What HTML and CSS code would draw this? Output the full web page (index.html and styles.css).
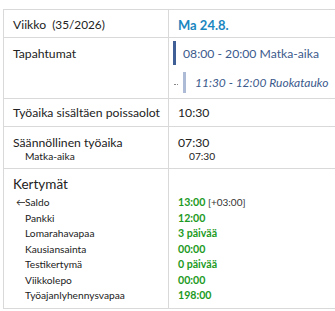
FILE: index.html
```html
<!DOCTYPE html>
<html lang="fi">
<head>
<meta charset="utf-8">
<link rel="stylesheet" href="styles.css">
</head>
<body>
<div class="table">
  <div class="row row-head">
    <div class="cell">Viikko <span class="week">(35/2026)</span></div>
    <div class="cell cell-r date">Ma 24.8.</div>
  </div>
  <div class="row row-events">
    <div class="cell">Tapahtumat</div>
    <div class="cell cell-r events">
      <div class="event ev1"><span class="bar bar1"></span><span>08:00 - 20:00 Matka-aika</span></div>
      <div class="event ev2"><span class="dots"></span><span class="bar bar2"></span><span class="it">11:30 - 12:00 Ruokatauko</span></div>
    </div>
  </div>
  <div class="row row-work">
    <div class="cell">Työaika sisältäen poissaolot</div>
    <div class="cell cell-r">10:30</div>
  </div>
  <div class="row row-reg">
    <div class="cell"><div>Säännöllinen työaika</div><div class="sub">Matka-aika</div></div>
    <div class="cell cell-r"><div>07:30</div><div class="sub">07:30</div></div>
  </div>
  <div class="row row-acc">
    <div class="cell">
      <div class="acc-title">Kertymät</div>
      <div class="list">
        <div class="item saldo"><span class="arrow">←</span><span>Saldo</span></div>
        <div class="item">Pankki</div>
        <div class="item">Lomarahavapaa</div>
        <div class="item">Kausiansainta</div>
        <div class="item">Testikertymä</div>
        <div class="item">Viikkolepo</div>
        <div class="item">Työajanlyhennysvapaa</div>
      </div>
    </div>
    <div class="cell cell-r">
      <div class="acc-title"></div>
      <div class="list vals">
        <div class="item">13:00 <span class="diff">[+03:00]</span></div>
        <div class="item">12:00</div>
        <div class="item">3 päivää</div>
        <div class="item">00:00</div>
        <div class="item">0 päivää</div>
        <div class="item">00:00</div>
        <div class="item">198:00</div>
      </div>
    </div>
  </div>
</div>
</body>
</html>
```
FILE: styles.css
```css
html, body {
  margin: 0;
  padding: 0;
  background: #fff;
}
body {
  font-family: Lato, "Open Sans", sans-serif;
  font-size: 12.2px;
  color: #222;
  overflow: hidden;
}
.table {
  margin: 9px 0 0 3px;
  width: 345px;
  border: 1px solid #d9d9d9;
  border-right: none;
}
.row {
  display: grid;
  grid-template-columns: 164px 1fr;
  border-bottom: 1px solid #d9d9d9;
}
.row:last-child { border-bottom: none; }
.cell {
  padding-left: 9px;
  white-space: nowrap;
}
.cell-r {
  border-left: 1px solid #d9d9d9;
}
.row-head { height: 27px; }
.row-head .cell { padding-top: 7px; line-height: 16px; }
.week { font-size: 11.8px; margin-left: 3px; }
.date { color: #1a86c0; font-weight: 700; font-size: 13px; }
.row-events { height: 60px; }
.row-events > .cell:first-child { padding-top: 8px; line-height: 16px; }
.events { padding-left: 4px; padding-top: 3px; }
.event { display: flex; align-items: center; color: #3c5a8c; font-size: 12.2px; }
.ev1 { height: 24px; }
.ev2 { height: 21px; margin-top: 7px; }
.bar { width: 3px; height: 100%; margin-right: 7px; flex: none; }
.bar1 { background: #3f5f96; }
.bar2 { background: #aebbd6; margin-right: 9px; }
.dots {
  width: 4px;
  height: 1px;
  margin: 2px 5px 0 1px;
  border-bottom: 1px dotted #888;
  flex: none;
}
.it { font-style: italic; font-size: 12px; }
.row-work { height: 27px; }
.row-work .cell { padding-top: 6px; line-height: 16px; }
.row-reg { height: 41px; }
.row-reg .cell { padding-top: 8px; line-height: 15px; }
.sub { font-size: 10.2px; padding-left: 12px; line-height: 13px; }
.cell-r .sub { padding-left: 11px; }
.row-acc { height: 139px; }
.row-acc .cell { padding-top: 5px; }
.acc-title { font-size: 13.5px; height: 21px; line-height: 21px; }
.list { font-size: 10.2px; }
.item { height: 15.5px; line-height: 15.5px; padding-left: 12px; }
.vals .item { padding-left: 0; color: #1c9a24; font-weight: 700; font-size: 10.6px; }
.diff { color: #333; font-weight: 400; font-size: 10px; }
.item.saldo { padding-left: 3px; display: flex; align-items: center; }
.arrow { display: inline-block; width: 9px; font-size: 10px; flex: none; overflow: hidden; }
```
